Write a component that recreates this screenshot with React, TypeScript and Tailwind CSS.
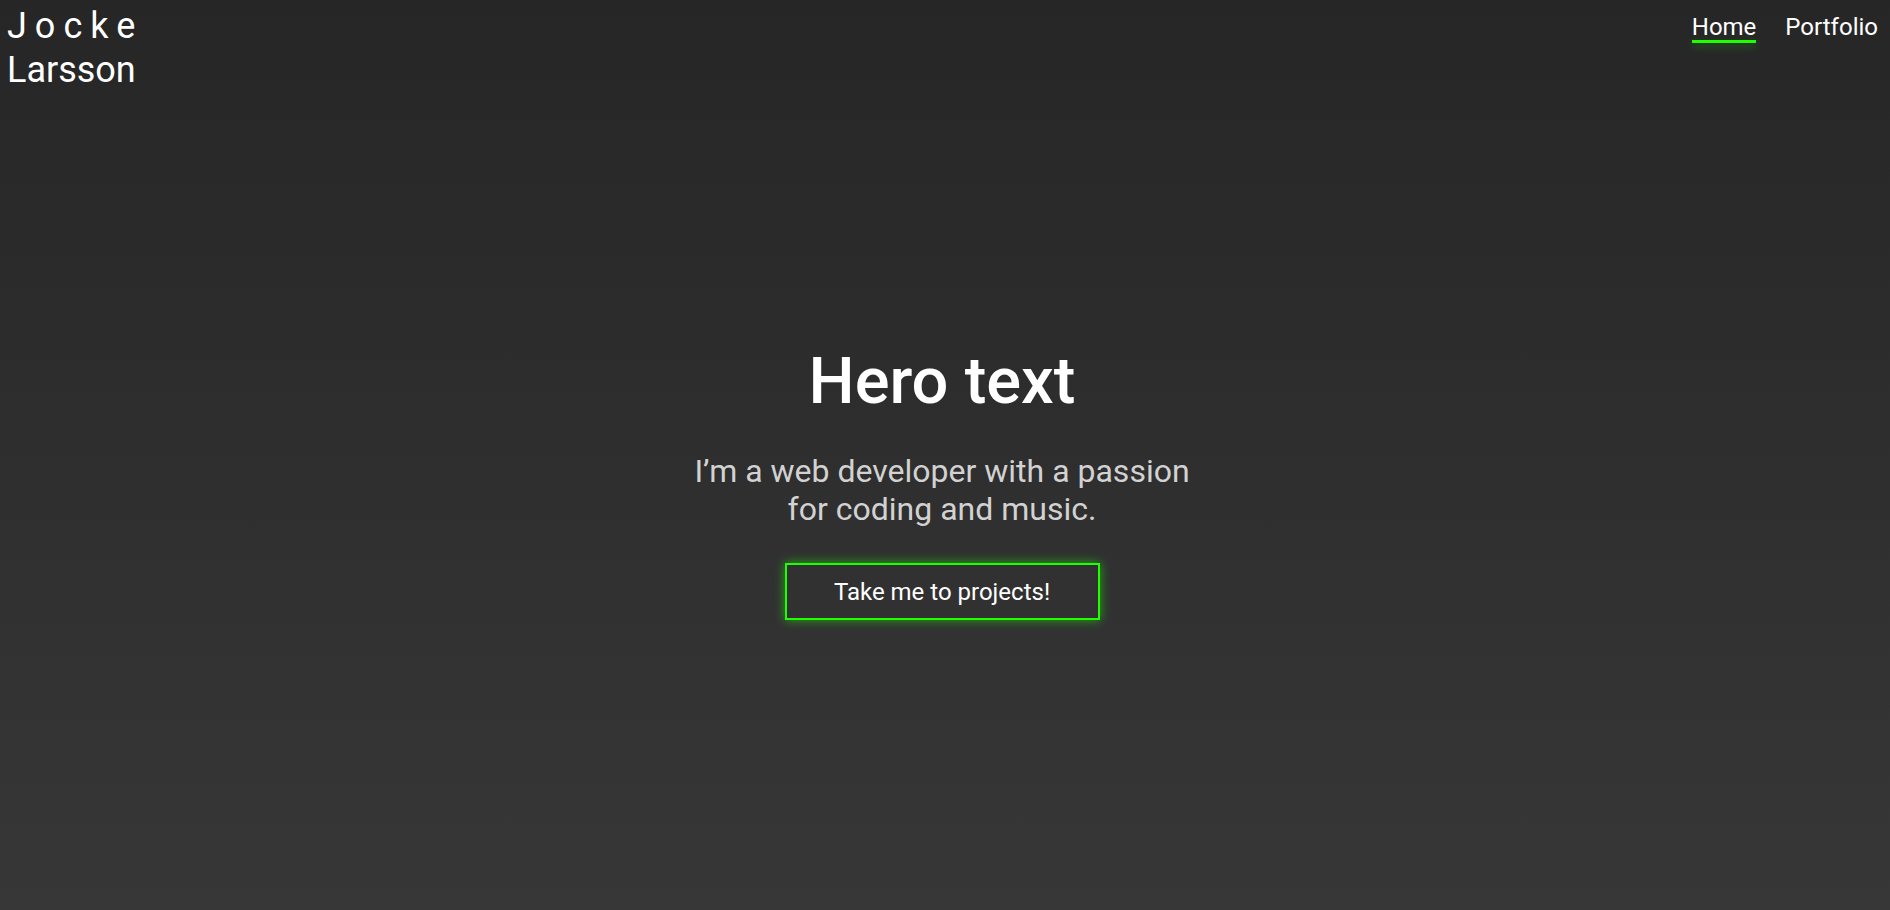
export default function App() {
  return (
    <div
      className="min-h-screen w-full bg-linear-to-b from-[#262626] to-[#373737] text-white"
      style={{ fontFamily: 'Roboto, "Liberation Sans", sans-serif' }}
    >
      <header className="flex items-start justify-between">
        <a href="#" className="block pl-[7px] pt-[4px] text-[36px] leading-[44px] font-normal text-white">
          <span className="block tracking-[8px]">Jocke</span>
          <span className="block">Larsson</span>
        </a>
        <nav className="flex gap-[29px] pr-[12px] pt-[14px] text-[24px] leading-[26px]">
          <a href="#" className="relative text-white">
            Home
            <span className="absolute left-0 right-0 top-[26px] h-[3px] bg-[#1eff00] shadow-[0_3px_8px_rgba(30,255,0,0.35)]" />
          </a>
          <a href="#" className="text-white">
            Portfolio
          </a>
        </nav>
      </header>

      <main className="flex flex-col items-center pt-[251px] pr-[6px] text-center">
        <h1 className="text-[65px] leading-[77px] font-medium text-white">Hero text</h1>
        <p className="mt-[32px] max-w-[530px] text-[32px] leading-[38px] text-[#d2d2d2]">
          I’m a web developer with a passion for coding and music.
        </p>
        <button className="mt-[35px] h-[57px] w-[315px] border-2 border-[#1eff00] text-[24px] text-white shadow-[0_0_10px_rgba(30,255,0,0.6)]">
          Take me to projects!
        </button>
      </main>
    </div>
  );
}
